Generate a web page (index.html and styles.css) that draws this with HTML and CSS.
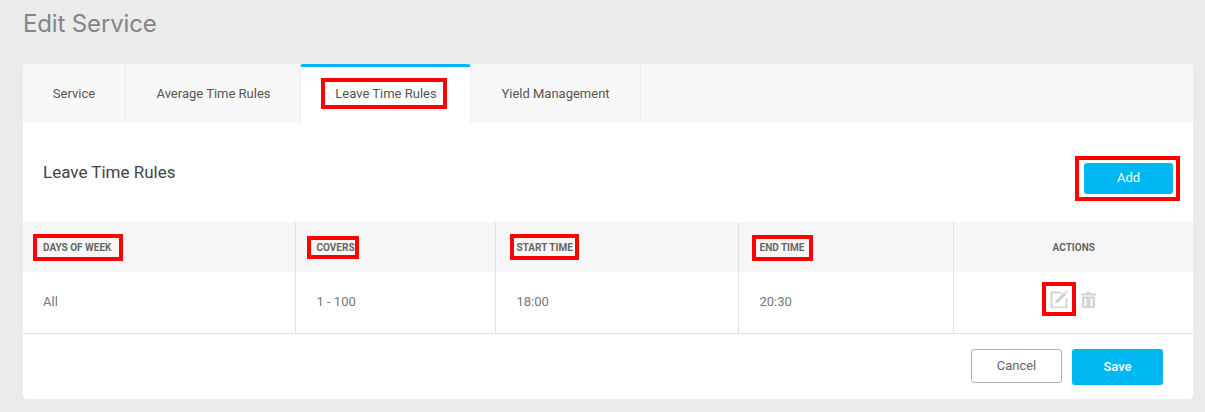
FILE: index.html
```html
<!DOCTYPE html>
<html lang="en">
  <head>
    <meta charset="UTF-8" />
    <meta name="viewport" content="width=device-width, initial-scale=1.0" />
    <title>Edit Service</title>
    <link rel="stylesheet" href="styles.css">
  </head>
  <body>
    <h1 class="page-title">Edit Service</h1>

    <main class="card">
      <nav class="tabs">
        <a class="tab tab-service">Service</a>
        <a class="tab tab-average">Average Time Rules</a>
        <a class="tab tab-leave active"><span class="mark">Leave Time Rules</span></a>
        <a class="tab tab-yield">Yield Management</a>
      </nav>

      <div class="section-head">
        <h2>Leave Time Rules</h2>
        <div class="add-wrap mark">
          <button class="btn btn-primary btn-add">Add</button>
        </div>
      </div>

      <!-- Rules table -->
      <table class="rules">
        <thead>
          <tr>
            <th class="col-days"><span class="mark">DAYS OF WEEK</span></th>
            <th class="col-covers"><span class="mark">COVERS</span></th>
            <th class="col-start"><span class="mark">START TIME</span></th>
            <th class="col-end"><span class="mark">END TIME</span></th>
            <th class="col-actions">ACTIONS</th>
          </tr>
        </thead>
        <tbody>
          <tr>
            <td>All</td>
            <td>1 - 100</td>
            <td>18:00</td>
            <td>20:30</td>
            <td>
              <div class="actions">
                <span class="icon-btn mark">
                  <svg width="18" height="18" viewBox="0 0 18 18">
                    <path d="M11 2.5H1.5v15h15V8" fill="none" stroke="#d4d4d4" stroke-width="2" />
                    <path d="M5 13.5l1-3.5 8-8 2.5 2.5-8 8z" fill="#d4d4d4" />
                    <path d="M14.8 1.2l1-1 2.2 2.2-1 1z" fill="#d4d4d4" />
                  </svg>
                </span>
                <span class="icon-btn">
                  <svg width="15" height="16" viewBox="0 0 15 16">
                    <path d="M5 0h5v1.5h5v2H0v-2h5z" fill="#d4d4d4" />
                    <path fill-rule="evenodd" d="M1 4.5h13V16H1zM3.5 6.5v7.5h2V6.5zM9.5 6.5v7.5h2V6.5z" fill="#d4d4d4" />
                  </svg>
                </span>
              </div>
            </td>
          </tr>
        </tbody>
      </table>

      <div class="card-footer">
        <button class="btn btn-cancel">Cancel</button>
        <button class="btn btn-primary btn-save">Save</button>
      </div>
    </main>
  </body>
</html>
```

FILE: styles.css
```css
/* Basic styling */
html,
body {
  height: 412px;
  overflow: hidden;
}

body {
  font-family: Roboto, Arial, sans-serif;
  background-color: #ebebeb;
  color: #666;
  margin: 0;
  padding: 0 12px 0 23px;
}

.page-title {
  margin: 0;
  height: 64px;
  padding-top: 9px;
  box-sizing: border-box;
  font-family: Inter, Arial, sans-serif;
  font-size: 24px;
  line-height: 30px;
  font-weight: 400;
  letter-spacing: -0.15px;
  color: #858585;
}

.card {
  background-color: white;
  border-radius: 4px;
  height: 335px;
  overflow: hidden;
}

.mark {
  outline: 4px solid #f00;
}

/* Tabs */
.tabs {
  display: flex;
  height: 59px;
  background-color: #f8f8f8;
}

.tab {
  display: flex;
  align-items: center;
  justify-content: center;
  box-sizing: border-box;
  border-right: 1px solid #ececec;
  font-size: 13px;
  color: #555;
  padding-bottom: 1px;
}

.tab-service {
  width: 103px;
}

.tab-average {
  width: 175px;
  padding-left: 1px;
}

.tab-leave {
  width: 170px;
}

.tab-yield {
  width: 170px;
}

.tab.active {
  background-color: white;
  border-top: 3px solid #00b7f1;
  border-left: 1px solid #ececec;
  border-radius: 3px 3px 0 0;
  margin-left: -1px;
  width: 171px;
  padding-bottom: 4px;
}

.tab.active .mark {
  display: flex;
  align-items: center;
  justify-content: center;
  box-sizing: border-box;
  width: 118px;
  height: 23px;
  margin-right: 3px;
  padding-left: 4px;
  white-space: nowrap;
}

/* Section heading */
.section-head {
  display: flex;
  justify-content: space-between;
  align-items: flex-start;
  height: 99px;
  padding: 37px 20px 0 20px;
  box-sizing: border-box;
}

.section-head h2 {
  margin: 0;
  font-size: 17px;
  line-height: 24px;
  font-weight: 400;
  color: #444;
}

.add-wrap {
  display: flex;
  margin-right: -3px;
  padding: 3px 3px 3px 5px;
}

/* Buttons */
.btn {
  font-family: Roboto, Arial, sans-serif;
  border-radius: 3px;
  cursor: pointer;
  font-size: 13px;
  padding: 0;
}

.btn-primary {
  background-color: #00b7f1;
  color: white;
  border: none;
  font-weight: 500;
}

.btn-add {
  width: 89px;
  height: 31px;
  padding-bottom: 2px;
  font-weight: 400;
}

.btn-cancel {
  width: 91px;
  height: 34px;
  padding-bottom: 1px;
  background-color: white;
  border: 1px solid #b0b0b0;
  color: #666;
}

.btn-save {
  width: 91px;
  height: 36px;
}

/* Table */
.rules {
  width: 100%;
  border-collapse: collapse;
  table-layout: fixed;
}

.rules th,
.rules td {
  box-sizing: border-box;
  padding: 0 20px 0 21px;
  border-right: 1px solid #e2e2e2;
}

.rules th:first-child,
.rules td:first-child {
  padding-left: 20px;
}

.rules th {
  height: 50px;
  background-color: #f6f6f6;
  font-size: 10px;
  font-weight: 700;
  text-align: left;
  color: #666;
}

.rules td {
  height: 61px;
  padding-bottom: 2px;
  font-size: 13px;
  color: #777;
  border-bottom: 1px solid #e2e2e2;
}

.rules th:last-child,
.rules td:last-child {
  border-right: none;
}

.col-days {
  width: 272px;
}

.col-covers {
  width: 200px;
}

.col-start {
  width: 243px;
}

.col-end {
  width: 215px;
}

.col-days .mark {
  padding: 4px 8px 4px 6px;
  margin-left: -6px;
}

.col-covers .mark {
  padding: 2px 0 2px 6px;
  margin-left: -6px;
}

.col-start .mark {
  padding: 4px 2px 3px 3px;
  margin-left: -3px;
}

.col-end .mark {
  padding: 3px 5px 4px 4px;
  margin-left: -4px;
}

.rules th.col-actions {
  text-align: center;
}

.actions {
  display: flex;
  justify-content: center;
  align-items: flex-start;
  gap: 9px;
  padding: 0 5px 5px 0;
}

.icon-btn {
  display: flex;
}

.icon-btn.mark {
  padding: 4px;
}

.icon-btn:last-child {
  padding-top: 6px;
}

/* Footer */
.card-footer {
  display: flex;
  justify-content: flex-end;
  align-items: flex-start;
  gap: 10px;
  padding: 15px 30px 0 0;
}
```
